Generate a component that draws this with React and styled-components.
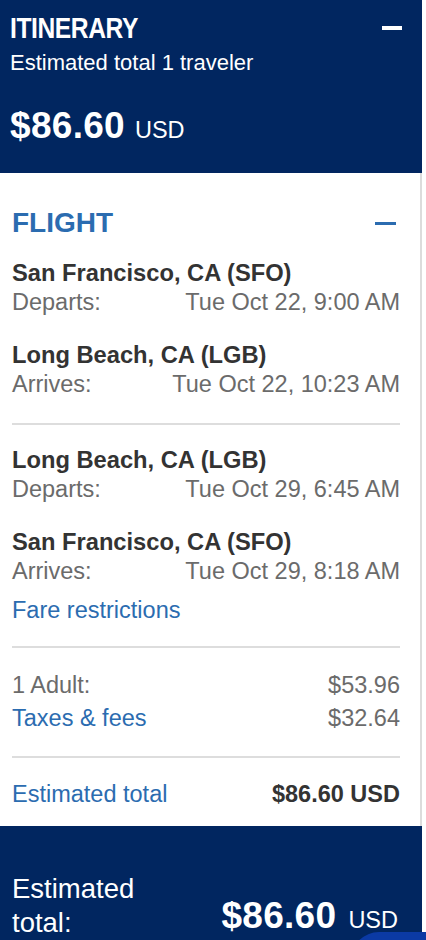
import styled, { createGlobalStyle } from 'styled-components';

const GlobalStyle = createGlobalStyle`
  html, body {
    margin: 0;
    padding: 0;
    background: #ffffff;
  }
  body {
    font-family: "Liberation Sans", Arial, sans-serif;
    -webkit-font-smoothing: antialiased;
  }
`;

const Page = styled.div`
  position: relative;
  width: 426px;
  height: 940px;
  overflow: hidden;
  background: #ffffff;
`;

const Panel = styled.div`
  width: 422px;
  display: flex;
  flex-direction: column;
`;

const Header = styled.div`
  background: #012660;
  color: #ffffff;
  height: 173px;
  box-sizing: border-box;
  padding: 12px 20px 0 10px;
`;

const TitleRow = styled.div`
  display: flex;
  justify-content: space-between;
  align-items: center;
  height: 32px;
`;

const Title = styled.h1`
  margin: 0;
  font-size: 30px;
  line-height: 32px;
  font-weight: 700;
  letter-spacing: -0.5px;
  display: inline-block;
  transform: scaleX(0.82);
  transform-origin: left center;
`;

const Minus = styled.span`
  display: block;
  width: ${(p) => p.width || 20}px;
  height: ${(p) => p.thick || 4}px;
  background: ${(p) => p.color || '#ffffff'};
  margin-right: ${(p) => p.offset || 0}px;
`;

const Subtitle = styled.div`
  margin-top: 6px;
  font-size: 22px;
  line-height: 26px;
`;

const BigPrice = styled.div`
  margin-top: ${(p) => p.top || 0}px;
  display: flex;
  align-items: baseline;
  gap: 10px;
  line-height: 40px;
`;

const Amount = styled.span`
  font-size: 37px;
  font-weight: 700;
  letter-spacing: 0.3px;
`;

const Currency = styled.span`
  font-size: 23.5px;
`;

const Body = styled.div`
  border-right: 2px solid #dcdcdc;
  padding: 34px 20px 17px 12px;
  display: flex;
  flex-direction: column;
  color: #333333;
`;

const SectionRow = styled.div`
  display: flex;
  justify-content: space-between;
  align-items: center;
  height: 32px;
`;

const SectionTitle = styled.h2`
  margin: 0;
  font-size: 28px;
  line-height: 32px;
  font-weight: 700;
  color: #2b6cb0;
`;

const Segment = styled.div`
  margin-top: ${(p) => p.top}px;
`;

const Place = styled.div`
  font-size: 23.7px;
  line-height: 29px;
  font-weight: 700;
  color: #333333;
`;

const Line = styled.div`
  display: flex;
  justify-content: space-between;
  font-size: 23.5px;
  line-height: 29px;
  color: ${(p) => (p.dark ? '#333333' : '#6b6b6b')};
  margin-top: ${(p) => p.top || 0}px;
`;

const Link = styled.a`
  color: #2b6cb0;
  text-decoration: none;
  font-size: 23.5px;
  line-height: 29px;
  cursor: pointer;
`;

const Strong = styled.span`
  font-weight: 700;
  color: #333333;
`;

const Divider = styled.hr`
  border: none;
  height: 2px;
  background: #dddddd;
  margin: ${(p) => p.above}px 0 ${(p) => p.below}px;
`;

const Footer = styled.div`
  background: #012660;
  color: #ffffff;
  flex: 1;
  min-height: 114px;
  box-sizing: border-box;
  padding: 43px 24px 0 12px;
  display: flex;
  justify-content: space-between;
  align-items: flex-end;
`;

const FooterLabel = styled.div`
  width: 150px;
  font-size: 27.5px;
  line-height: 34px;
`;

const FooterPrice = styled.div`
  display: flex;
  align-items: baseline;
  gap: 12px;
  line-height: 38px;
  margin-bottom: 1px;
`;

const ChatBubble = styled.div`
  position: absolute;
  right: -50px;
  bottom: -40px;
  width: 125px;
  height: 48px;
  border-radius: 28px 0 0 0;
  background: #0b3aa4;
`;

const outbound = [
  { place: 'San Francisco, CA (SFO)', label: 'Departs:', time: 'Tue Oct 22, 9:00 AM' },
  { place: 'Long Beach, CA (LGB)', label: 'Arrives:', time: 'Tue Oct 22, 10:23 AM' },
];

const inbound = [
  { place: 'Long Beach, CA (LGB)', label: 'Departs:', time: 'Tue Oct 29, 6:45 AM' },
  { place: 'San Francisco, CA (SFO)', label: 'Arrives:', time: 'Tue Oct 29, 8:18 AM' },
];

function Leg({ stops, first }) {
  return stops.map((s, i) => (
    <Segment key={s.place + s.label} top={i === 0 ? first : 24}>
      <Place>{s.place}</Place>
      <Line>
        <span>{s.label}</span>
        <span>{s.time}</span>
      </Line>
    </Segment>
  ));
}

export default function App() {
  return (
    <>
      <GlobalStyle />
      <Page>
        <Panel>
          <Header>
            <TitleRow>
              <Title>ITINERARY</Title>
              <Minus width={20} thick={4} />
            </TitleRow>
            <Subtitle>Estimated total 1 traveler</Subtitle>
            <BigPrice top={30}>
              <Amount>$86.60</Amount>
              <Currency>USD</Currency>
            </BigPrice>
          </Header>

          <Body>
            <SectionRow>
              <SectionTitle>FLIGHT</SectionTitle>
              <Minus width={21} thick={3} color="#2b6cb0" offset={4} />
            </SectionRow>
            <Leg stops={outbound} first={20} />
            <Divider above={24} below={21} />
            <Leg stops={inbound} first={0} />
            <Line top={10}>
              <Link>Fare restrictions</Link>
            </Line>
            <Divider above={21} below={23} />
            <Line>
              <span>1 Adult:</span>
              <span>$53.96</span>
            </Line>
            <Line top={4}>
              <Link>Taxes &amp; fees</Link>
              <span>$32.64</span>
            </Line>
            <Divider above={23} below={22} />
            <Line dark>
              <Link>Estimated total</Link>
              <Strong>$86.60 USD</Strong>
            </Line>
          </Body>

          <Footer>
            <FooterLabel>Estimated total:</FooterLabel>
            <FooterPrice>
              <Amount>$86.60</Amount>
              <Currency>USD</Currency>
            </FooterPrice>
          </Footer>
        </Panel>
        <ChatBubble />
      </Page>
    </>
  );
}
